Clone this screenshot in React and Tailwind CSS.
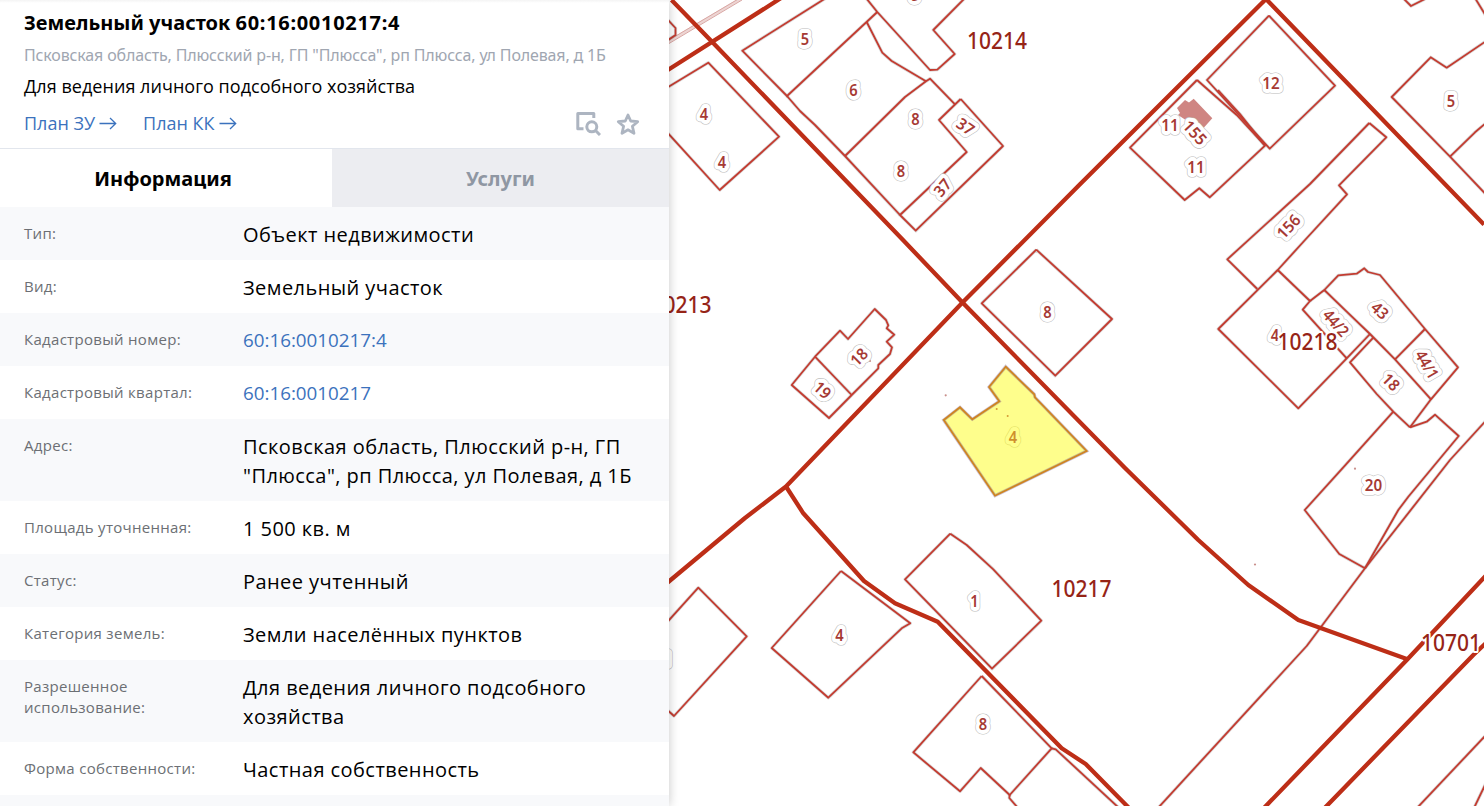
const rows = [
  { label: 'Тип:', value: 'Объект недвижимости' },
  { label: 'Вид:', value: 'Земельный участок' },
  { label: 'Кадастровый номер:', value: '60:16:0010217:4', link: true },
  { label: 'Кадастровый квартал:', value: '60:16:0010217', link: true },
  { label: 'Адрес:', value: 'Псковская область, Плюсский р-н, ГП "Плюсса", рп Плюсса, ул Полевая, д 1Б' },
  { label: 'Площадь уточненная:', value: '1 500 кв. м' },
  { label: 'Статус:', value: 'Ранее учтенный' },
  { label: 'Категория земель:', value: 'Земли населённых пунктов' },
  { label: 'Разрешенное использование:', value: 'Для ведения личного подсобного хозяйства' },
  { label: 'Форма собственности:', value: 'Частная собственность' },
  { label: '', value: '' },
];

const roads = [
  '671.5,0 712.5,42.3 903,240 962.5,302.5 1125,468 1180,522 1198.3,540 1248.3,585 1298.3,620 1407.5,659.3',
  '664,72.5 778,0 784,-4',
  '1484,224.5 1266,-1 1080,184.3 962.5,302.5 786,486.5 745,518 664,585.5',
  '786,486.5 803.3,513.3 864,581 895,603.3 937.7,621.7 1061.7,748.3 1085.7,764 1129,808',
  '1487,574.5 1407.7,659 1263,809',
  '1487,642 1473.3,655 1323.7,809',
];

const parcels = [
  '665,17 669,21 675.5,28 675.5,35 665,42',
  '665,89 708.3,62.7 779,136.7 719.7,190 665,130',
  '826,-2 742.3,50.7 787,96 877.3,12',
  '866,-2 877.3,12 930,70 937.3,69.7 954.7,54 933.3,30 965,-2',
  '787,96 800,111 815,125 845,156 900,215',
  '845,156 905,97 926,81.3 930,78.7 955,104.3',
  '926,81.3 891.7,61 882.3,52.7 866.7,22',
  '960.7,99 939,120 966.7,152 900,215 915.7,230.7 1003,146 960.7,99',
  '1269,15.7 1335,85.7 1269.7,148.7 1207,80 1269,15.7',
  '1197,80 1130,147.7 1184.7,200 1199.3,188.3 1209.7,197.3 1265,145.7 1236.7,115 1197,80',
  '1218,90 1240,114 1265,145.7',
  '1369.3,123 1386.3,137.3 1339,185.3 1347,194.3 1305,240 1277.7,270 1218.3,329 1298.3,408.3 1346.7,358.3 1370,334',
  '1257.3,289 1227.3,259.3 1310,184 1369.3,123',
  '1277.7,270 1310,301 1302.7,309.7 1346.7,358.3',
  '1310,301 1324.3,290 1338.3,275.3 1356.7,273.7 1364.3,268.3 1368,272 1380,275 1425,329 1458,367.3 1431,399.3 1410,427.3',
  '1324.3,290 1346.7,311.7 1370,334 1395,359.3 1431,399.3',
  '1395,359.3 1425,329',
  '1373.3,337.7 1350,362.3 1376.7,394 1393.3,411.7 1410,427.3',
  '1393.3,411.7 1343.3,467.3 1304.7,510 1339.3,554 1365,568.3',
  '1410,427.3 1426.7,421.7 1435,414.7 1458.7,436 1408.3,496.7 1398.3,510 1365,568.3',
  '1487,419.5 1450,460 1365,568.3 1306.7,646 1158,808',
  '1403,-2 1411,6 1425,-1',
  '1475,-2 1486,16',
  '1487,40.5 1446.7,67.7 1430.7,57.3 1391.7,97 1450,156.7 1487,195.5',
  '1450,156.7 1475,132.3 1487,122',
  '1487,734 1417,808',
  '1486,783 1474,808',
  '1036.3,249.7 1112,319 1055.3,375.7 981.7,303.3 1036.3,249.7',
  '815,356.7 791.7,385 829,418 851.7,395 815,356.7 840,330.7 848,339 874.7,309 886,320 888.3,325.3 886.7,328.3 894.3,334.7 886.7,341.7 892,347.3 890,354 878.3,365 878.3,368.3 851.7,395',
  '665,624.5 698.3,587.7 746.7,636.3 674,716 665,708',
  '841,571 910.3,623.3 901.7,628.3 828.3,697.7 771.7,648 841,571',
  '950.3,533.7 966.7,545 993.3,569.3 1041.3,620.7 992,668.7 905,579.3 950.3,533.7',
  '981.7,676 1051.7,748.3 1009.7,795 980.7,768 960,791.3 913.3,752.3 981.7,676',
  '1051.7,748.3 1055.7,749.3 1119,808',
  '1009.7,795 1009.3,798 1018,808',
];

const numbers = [
  ['5', 805, 39.5], ['6', 853.5, 90.5], ['4', 704, 114.5], ['4', 722, 162.5], ['8', 915.5, 119.5],
  ['8', 901, 171], ['37', 965.5, 126.5, 35], ['37', 942.5, 187.5, -50], ['8', 914.5, -5],
  ['12', 1271, 83], ['11', 1170, 125.5], ['155', 1195, 132.5, 48], ['11', 1196, 167], ['5', 1451, 101],
  ['156', 1288.5, 226.5, -47], ['43', 1380, 310.5, 42], ['44/2', 1336, 323, 48], ['44/1', 1427, 364.5, 60],
  ['18', 1391, 382, 45], ['4', 1275, 335], ['20', 1373.5, 485], ['8', 1047.5, 312.5],
  ['18', 859, 357, -45], ['19', 822.5, 390, 42], ['1', 974.5, 601], ['4', 839.5, 635], ['8', 983, 724.5],
  ['1', 667, 659],
];

const quarters = [
  ['10214', 997, 41], ['10213', 681.5, 305], ['10218', 1307.5, 342], ['10217', 1081.5, 589], ['10701', 1451, 643],
];

const dots = [[945.7, 395.3], [1255, 564.5], [1355, 468.7], [870, 361]];

function Arrow() {
  return (
    <svg className="ml-1" width="18" height="16" viewBox="0 0 18 16" fill="none" stroke="#3b72bd" strokeWidth="1.3">
      <path d="M0.5 7.5H16.5M11 2l5.700 5.500-5.700 5.500" />
    </svg>
  );
}

function ParcelNumber({ text, x, y, angle = 0, color = '#a63a34', selected = false }) {
  const width = text.includes('/') ? 30 : text.length * 9 - 0.6;
  const common = {
    textAnchor: 'middle', y: 5.8, textLength: width, lengthAdjust: 'spacingAndGlyphs', strokeLinejoin: 'round',
  };
  return (
    <g transform={`translate(${x} ${y}) rotate(${angle})`}>
      <text {...common} fill={color} stroke={selected ? '#e3df66' : '#bdbdbd'} strokeWidth="9">{text}</text>
      <text {...common} fill={color} stroke={selected ? '#fefe8c' : '#fff'} strokeWidth="7.8" aria-hidden="true">{text}</text>
      <text {...common} fill={color} aria-hidden="true">{text}</text>
    </g>
  );
}

function CadastralMap() {
  return (
    <svg className="block h-full w-full" viewBox="669 0 815 806" fill="none">
      <path d="M664 44.5L742-2" stroke="#edd5d3" strokeWidth="3" />
      <path d="M664 46.5L742 0M664 43L740-2" stroke="#d8a6a3" strokeWidth="1" />
      <g stroke="#444" strokeOpacity=".2" strokeWidth="3.3" strokeLinejoin="round">
        {parcels.map((p) => <polyline key={p} points={p} />)}
      </g>
      <g stroke="#c33b30" strokeWidth="1.8" strokeLinejoin="round">
        {parcels.map((p) => <polyline key={p} points={p} />)}
      </g>
      <path d="M1177 108L1185 100l4 2.5 4.7-3.8 18.6 19.6-9 10-8-2L1178 115l2-2z" fill="#cf8582" />
      <path
        d="M1005.7 366.7L1034.3 394.3 1035 397.3 1086.7 451 995 495.7 943.7 420 960 407.3 972.3 419.3 999.3 401.3 989 387z"
        fill="#fefe8c" stroke="#8f78a0" strokeOpacity=".45" strokeWidth="3.2"
      />
      <path
        d="M1005.7 366.7L1034.3 394.3 1035 397.3 1086.7 451 995 495.7 943.7 420 960 407.3 972.3 419.3 999.3 401.3 989 387z"
        stroke="#cf8420" strokeWidth="1.8"
      />
      <g stroke="#bd2e17" strokeWidth="4.3" strokeLinejoin="round">
        {roads.map((p) => <polyline key={p} points={p} />)}
      </g>
      {dots.map(([x, y]) => <circle key={x} cx={x} cy={y} r="1.1" fill="#c98f8b" />)}
      <circle cx="996.7" cy="409" r="1" fill="#d59b35" />
      <circle cx="1007.7" cy="416" r="1" fill="#d59b35" />
      <g fontSize="16" fontWeight="600" fontFamily="'Noto Sans', sans-serif">
        {numbers.map(([text, x, y, angle]) => (
          <ParcelNumber key={`${text}-${x}`} text={text} x={x} y={y} angle={angle} />
        ))}
        <ParcelNumber text="4" x={1013} y={437} color="#cf8f2c" selected />
      </g>
      <g fontSize="24" fontWeight="500" fontFamily="'Noto Sans', sans-serif" fill="#962417" stroke="#fff" strokeWidth="4" strokeLinejoin="round" textAnchor="middle">
        {quarters.map(([text, x, y]) => (
          <text key={text} x={x} y={y + 8} textLength="60" lengthAdjust="spacingAndGlyphs" className="[paint-order:stroke]">{text}</text>
        ))}
      </g>
    </svg>
  );
}

export default function App() {
  return (
    <div className="flex h-[806px] w-full overflow-hidden bg-white font-['Open_Sans','Noto_Sans',sans-serif] text-black">
      <aside className="z-10 flex w-[669px] shrink-0 flex-col bg-white shadow-[0_0_10px_rgba(0,0,0,0.22)]">
        <header className="flex h-[149px] shrink-0 flex-col border-b border-[#e2e6ed] bg-linear-to-b from-[#f4f4f4] to-white to-[3px] pl-6 pr-[29px] pt-[9px]">
          <h1 className="font-['Noto_Sans',sans-serif] text-[20px] font-bold leading-7">
            Земельный участок <span className="tracking-[0.7px]">60:16:0010217:4</span>
          </h1>
          <p className="mt-[6px] whitespace-nowrap font-['Noto_Sans',sans-serif] text-base tracking-[-0.15px] text-[#a0a6b1]">
            Псковская область, Плюсский р-н, ГП "Плюсса", рп Плюсса, ул Полевая, д 1Б
          </p>
          <p className="mt-[6px] text-lg leading-[27px] tracking-[0.04px]">Для ведения личного подсобного хозяйства</p>
          <div className="mt-[10px] flex items-center justify-between">
            <nav className="flex gap-[26px] text-lg leading-[27px] text-[#3b72bd]">
              <a className="flex items-center">План ЗУ<Arrow /></a>
              <a className="flex items-center">План КК<Arrow /></a>
            </nav>
            <div className="-mt-px flex gap-[15px] text-[#adb5c1]">
              <svg width="25" height="25" viewBox="0 0 25 25" fill="none" stroke="currentColor" strokeWidth="3">
                <path d="M7.5 17.8H1.8V2.5H17.8V7" strokeLinejoin="round" />
                <circle cx="15.8" cy="15.8" r="5" />
                <path d="M19.3 19.3L24 24" />
              </svg>
              <svg width="24" height="25" viewBox="0 0 24 25" fill="none" stroke="currentColor" strokeWidth="2.8" strokeLinejoin="round">
                <path d="M12 4l2.700 6 7 .7-5.300 4.500 1.600 7.200L12 18.800 6 22.400l1.600-7.200L2.300 10.700l7-.7z" />
              </svg>
            </div>
          </div>
        </header>
        <div className="flex h-[58px] shrink-0 font-['Noto_Sans',sans-serif] text-[20px] font-bold leading-[58px]">
          <button className="w-[332px] pr-[6px] pt-px">Информация</button>
          <button className="flex-1 bg-[#ecedf1] pt-px text-[#8f97a3]">Услуги</button>
        </div>
        <dl>
          {rows.map((row, i) => (
            <div key={i} className={`flex min-h-[53px] pb-[11px] pl-6 pt-[13px] ${i % 2 ? 'bg-white' : 'bg-[#f8f9fb]'}`}>
              <dt className="w-[219px] shrink-0 pr-5 pt-[3px] text-[15px] leading-[21px] tracking-[0.3px] text-[#6c6f74]">{row.label}</dt>
              <dd
                className={`w-[402px] leading-[29px] ${
                  row.link ? 'text-[18.8px] text-[#3b72bd]' : 'text-[20px] tracking-[0.44px]'
                }`}
              >
                {row.value}
              </dd>
            </div>
          ))}
        </dl>
      </aside>
      <main className="min-w-0 flex-1">
        <CadastralMap />
      </main>
    </div>
  );
}
